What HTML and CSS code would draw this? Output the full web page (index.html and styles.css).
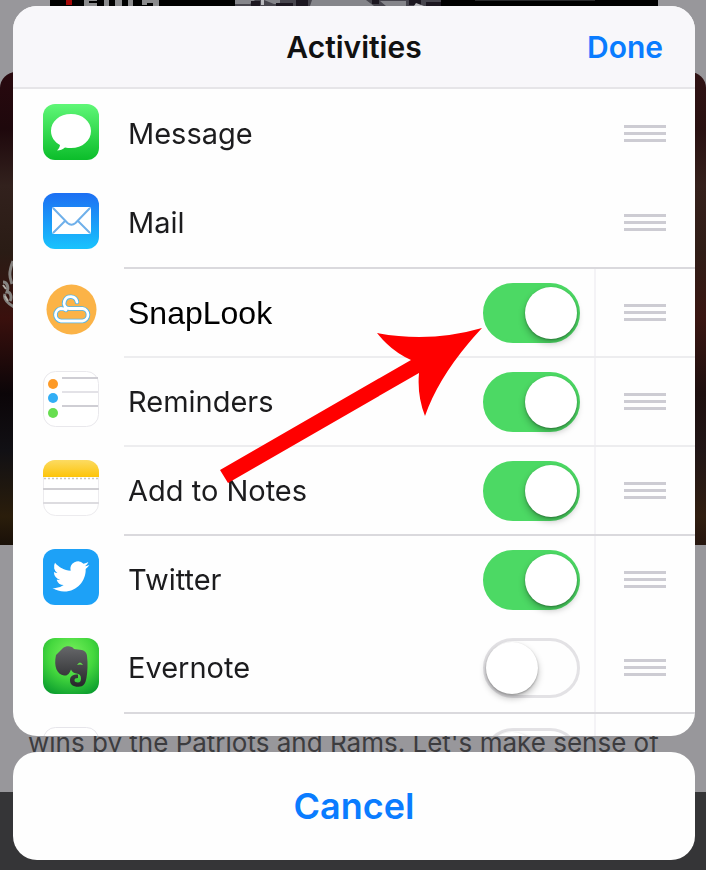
FILE: index.html
```html
<!DOCTYPE html>
<html lang="en">
<head>
<meta charset="utf-8">
<meta name="viewport" content="width=device-width, initial-scale=1">
<title>Activities</title>
<link rel="stylesheet" href="styles.css">
</head>
<body>
<div class="backdrop">
  <div class="poster">
    <svg class="poster-art" viewBox="0 0 608 6" preserveAspectRatio="none" aria-hidden="true">
      <path fill="#a50808" d="M16 0h6v5h-6z"/>
      <path fill="#8b8b8d" d="M34 0h13v1H39v2h8v3H34zM54 0h5v6h-5zM65 0h7v6h-7zM78 0h5v6h-5zM92 0h17v6h-6V3h-6v2h-5z"/>
      <path fill="#47454d" d="M185 0h206v6H185z"/>
      <path fill="#85858a" d="M185 0h20l-5 4h-15zM214 0h16v4h-6zM262 0h54l8 6h-64zM330 1h26v5h-20z"/>
      <path fill="#1c1720" d="M201 1h9v5h-9zM226 3h17v3h-17zM246 0h12v6h-12zM322 0h7v4h-7zM359 0h12v5h-12zM376 2h15v4h-15z"/>
      <path fill="#b9b9bd" d="M211 0h3v5h-3zM366 3l8 3h-10z"/>
      <path fill="#29292b" d="M425 0h120v1H425z"/>
    </svg>
  </div>
  <div class="hero">
    <svg class="hero-art" viewBox="0 0 14 60" aria-hidden="true">
      <path d="M13 1C8 14 10 18 12 24M3 22c4 0 6 5 4 10 4 0 5 6 3 9M5 34c-2 5 4 10 9 13" fill="none" stroke="#85827f" stroke-width="3"/>
      <path d="M5 36l3 5M3 25l3 4" stroke="#b3afa9" stroke-width="2"/>
    </svg>
  </div>
  <p class="article">wins by the Patriots and Rams. Let's make sense of</p>
  <div class="toolbar"></div>
</div>

<main class="sheet">
  <section class="panel">
    <header class="bar">
      <h1 class="title">Activities</h1>
      <button class="done" type="button">Done</button>
    </header>
    <ul class="list">
      <li class="row">
        <svg class="icon" viewBox="0 0 56 56" aria-hidden="true">
          <defs><linearGradient id="gMsg" x1="0" y1="0" x2="0" y2="1"><stop offset="0" stop-color="#5ff777"/><stop offset="1" stop-color="#0bbd2a"/></linearGradient></defs>
          <rect width="56" height="56" rx="12" fill="url(#gMsg)"/>
          <path fill="#fff" d="M28 10c-11.500 0-20 7.500-20 17 0 6 3.500 11 9 14-.3 2.200-1.200 4-3 5.500 3 0 5.800-1 8-3 2 .4 4 .6 6 .6 11.500 0 20-7.600 20-17.100S39.500 10 28 10z"/>
        </svg>
        <div class="cell"><span class="name">Message</span></div>
        <div class="side"><span class="grip"></span></div>
      </li>
      <li class="row">
        <svg class="icon" viewBox="0 0 56 56" aria-hidden="true">
          <defs><linearGradient id="gMail" x1="0" y1="0" x2="0" y2="1"><stop offset="0" stop-color="#1d6ff3"/><stop offset="1" stop-color="#19c3fd"/></linearGradient></defs>
          <rect width="56" height="56" rx="12" fill="url(#gMail)"/>
          <rect x="9" y="14" width="39" height="27" rx="2" fill="#fff"/>
          <path d="M10 15l14.500 15q4 3.500 8 0L47 15M10 40l12-12M47 40L35 28" fill="none" stroke="#6fb0ea" stroke-width="2"/>
        </svg>
        <div class="cell"><span class="name">Mail</span></div>
        <div class="side"><span class="grip"></span></div>
      </li>
      <li class="row row-ruled strong">
        <svg class="icon" viewBox="0 0 56 56" aria-hidden="true">
          <circle cx="28.500" cy="27.500" r="25" fill="#fbb347"/>
          <g fill="none" stroke-linecap="round" stroke-linejoin="round">
            <path d="M34 20a6.500 6.500 0 0 0-12.500-1c-1.500 4 1 7.500 5 7.500h13a6.300 6.300 0 0 1 0 12.500H18a6.300 6.300 0 0 1 0-12.500c2.500 0 3.500.5 5 1.500" stroke="#4eb5ed" stroke-width="4.500"/>
            <path d="M34 20a6.500 6.500 0 0 0-12.500-1c-1.500 4 1 7.500 5 7.500h13a6.300 6.300 0 0 1 0 12.500H18a6.300 6.300 0 0 1 0-12.500c2.500 0 3.500.5 5 1.500" stroke="#fff" stroke-width="2.800"/>
          </g>
        </svg>
        <div class="cell"><label class="name name-alt" for="s1">SnapLook</label><input class="switch" id="s1" type="checkbox" role="switch" checked></div>
        <div class="side split"><span class="grip"></span></div>
      </li>
      <li class="row row-ruled">
        <svg class="icon" viewBox="0 0 56 56" aria-hidden="true">
          <rect x=".5" y=".5" width="55" height="55" rx="12" fill="#fff" stroke="#e9e8ec"/>
          <path d="M19 7h36M19 35h36" stroke="#cfced4" stroke-width="2"/><path d="M19 21h36" stroke="#e3e2e7" stroke-width="2"/>
          <circle cx="10" cy="13" r="5" fill="#fd9a27"/><circle cx="10" cy="27" r="5" fill="#32aef5"/><circle cx="10" cy="42" r="5" fill="#67de50"/>
        </svg>
        <div class="cell"><label class="name" for="s2">Reminders</label><input class="switch" id="s2" type="checkbox" role="switch" checked></div>
        <div class="side split"><span class="grip"></span></div>
      </li>
      <li class="row row-ruled">
        <svg class="icon" viewBox="0 0 56 56" aria-hidden="true">
          <defs><linearGradient id="gNote" x1="0" y1="0" x2="0" y2="1"><stop offset="0" stop-color="#fcdb62"/><stop offset="1" stop-color="#fdc409"/></linearGradient></defs>
          <rect x=".5" y=".5" width="55" height="55" rx="12" fill="#fff" stroke="#ecebee"/>
          <path d="M0 17v-5A12 12 0 0 1 12 0h32a12 12 0 0 1 12 12v5z" fill="url(#gNote)"/>
          <path d="M1 18.500h54" stroke="#c9c6bd" stroke-width="1.500" stroke-dasharray="2 2"/>
          <path d="M0 29h56" stroke="#d0cfd3" stroke-width="2"/><path d="M0 43h56" stroke="#dddce0" stroke-width="2"/>
        </svg>
        <div class="cell"><label class="name" for="s3">Add to Notes</label><input class="switch" id="s3" type="checkbox" role="switch" checked></div>
        <div class="side split"><span class="grip"></span></div>
      </li>
      <li class="row row-ruled strong">
        <svg class="icon" viewBox="0 0 56 56" aria-hidden="true">
          <rect width="56" height="56" rx="12" fill="#1da1f7"/>
          <path fill="#fff" transform="translate(9.500 9) scale(1.540)" d="M23.950 4.570a10 10 0 0 1-2.820.77 4.960 4.960 0 0 0 2.160-2.720c-.95.560-2 .960-3.130 1.190a4.920 4.920 0 0 0-8.380 4.480C7.690 8.090 4.070 6.130 1.640 3.160a4.920 4.920 0 0 0 1.520 6.570 4.900 4.900 0 0 1-2.230-.61v.06a4.920 4.920 0 0 0 3.950 4.830 5 5 0 0 1-2.210.08 4.940 4.940 0 0 0 4.600 3.420A9.870 9.870 0 0 1 0 19.540a14 14 0 0 0 7.550 2.210c9.050 0 14-7.500 14-13.980 0-.21 0-.42-.02-.63a9.940 9.940 0 0 0 2.420-2.570z"/>
        </svg>
        <div class="cell"><label class="name" for="s4">Twitter</label><input class="switch" id="s4" type="checkbox" role="switch" checked></div>
        <div class="side split"><span class="grip"></span></div>
      </li>
      <li class="row">
        <svg class="icon" viewBox="0 0 56 56" aria-hidden="true">
          <defs>
            <radialGradient id="gEver" cx=".5" cy=".3" r=".8"><stop offset="0" stop-color="#7bf25e"/><stop offset=".5" stop-color="#45d83e"/><stop offset="1" stop-color="#07992d"/></radialGradient>
            <linearGradient id="gEle" x1="0" y1="0" x2="0" y2="1"><stop offset="0" stop-color="#66676a"/><stop offset="1" stop-color="#262729"/></linearGradient>
          </defs>
          <rect width="56" height="56" rx="12" fill="url(#gEver)"/>
          <path fill="url(#gEle)" d="M13 17l7-7c3-2.500 9-2.500 11 1l6 .8c4 .5 6.500 2 7 6 1 8 .5 16-.5 22-1 6-3 9-8 9-6 0-8.500-2.500-8.500-6.500 0-4 2.500-5.800 8-5.800v3.500c-2.500 0-3.500.7-3.500 2.300 0 1.700 1.300 2.200 3.500 2.200s3-1.200 3-4c0-3-1.500-4.500-4.500-5-3-.4-4.500-1.500-5.500-4-1.500 4-3.500 6.500-7 6-7-1-10.500-9-8-20.500z"/>
          <path fill="#63df49" d="M34 27q3-5 6 0-3-1-6 0z"/>
        </svg>
        <div class="cell"><label class="name" for="s5">Evernote</label><input class="switch" id="s5" type="checkbox" role="switch"></div>
        <div class="side split"><span class="grip"></span></div>
      </li>
      <li class="row row-ruled strong">
        <svg class="icon" viewBox="0 0 56 56" aria-hidden="true"><rect x=".5" y=".5" width="55" height="55" rx="12" fill="#fff" stroke="#e6e5ea"/></svg>
        <div class="cell cell-end"><input class="switch" type="checkbox" role="switch" aria-label="More"></div>
        <div class="side split"><span class="grip"></span></div>
      </li>
    </ul>
    <svg class="arrow" viewBox="0 0 264 156" aria-hidden="true">
      <path fill="#f00" d="M0 142L191 32Q171 23 157 5Q210 15 262 0Q220 45 205 88Q197 68 199 45L8 155z"/>
    </svg>
  </section>
  <button class="cancel" type="button">Cancel</button>
</main>
</body>
</html>
```
FILE: styles.css
```css
* { box-sizing: border-box; }

body {
  margin: 0;
  font-family: Inter, "Liberation Sans", sans-serif;
  color: #1c1c1e;
  background: #98979b;
}

button {
  border: 0;
  font: inherit;
  font-weight: 600;
  color: #0a7cff;
  cursor: pointer;
}

.backdrop {
  position: fixed;
  inset: 0;
  display: flex;
  flex-direction: column;
  background: #98979b;
  overflow: hidden;
}

.poster {
  height: 40px;
  margin: 0 48px 0 50px;
  background: #000;
}

.poster-art { display: block; width: 100%; height: 6px; }

.hero {
  height: 473px;
  margin-top: 32px;
  padding-top: 188px;
  border-radius: 16px 16px 0 0;
  background:
    linear-gradient(90deg, #0000 50%, #3a1f1a66 50%),
    linear-gradient(#29090f, #1e080c 12%, #32211d 24%, #2a1c15 38%, #3a100d 52%, #0b0508 68%, #111014 80%, #2a1d0b 94%, #191008);
}

.hero-art { display: block; width: 14px; height: 60px; }

.article {
  margin: 0;
  padding: 182px 28px 0;
  height: 247px;
  font-size: 26px;
  line-height: 32px;
  white-space: nowrap;
  color: #3c3c3f;
}

.toolbar { flex: 1; background: #353537; }

.sheet {
  position: relative;
  display: flex;
  flex-direction: column;
  gap: 16px;
  height: 100vh;
  padding: 6px 11px 10px 13px;
}

.panel {
  position: relative;
  display: flex;
  flex: 1;
  flex-direction: column;
  min-height: 0;
  border-radius: 24px;
  background: #fefefe;
  overflow: hidden;
}

.bar {
  display: grid;
  grid-template-columns: 1fr auto 1fr;
  align-items: center;
  flex: none;
  height: 83px;
  padding: 0 32px;
  border-bottom: 2px solid #e6e5e8;
  background: #f8f7fa;
}

.title {
  grid-column: 2;
  margin: 0;
  font-size: 30px;
  font-weight: 600;
  line-height: 40px;
  color: #111;
}

.done {
  justify-self: end;
  padding: 0;
  font-size: 30px;
  line-height: 40px;
  background: none;
}

.list {
  flex: 1;
  min-height: 0;
  margin: 0;
  padding: 0;
  list-style: none;
  overflow: hidden;
}

.row {
  display: flex;
  height: 89px;
  padding-left: 30px;
}

.icon { flex: none; width: 56px; height: 56px; margin-top: 15px; }

.cell {
  display: flex;
  flex: 1;
  align-items: center;
  justify-content: space-between;
  margin-left: 25px;
  padding: 0 14px 0 4px;
}

.cell-end { justify-content: flex-end; }

.side {
  display: flex;
  align-items: center;
  justify-content: center;
  width: 101px;
}

.row-ruled .cell, .row-ruled .side { border-top: 2px solid #ededef; }
.strong .cell, .strong .side { border-top-color: #dad9dd; }
.split { box-shadow: inset 2px 0 #f4f3f6; }

.name { font-size: 29px; line-height: 40px; }
.name-alt { font-family: "Liberation Sans", Arial, sans-serif; font-size: 32px; color: #000; }

.grip {
  width: 42px;
  height: 18px;
  background: repeating-linear-gradient(#cdccd3 0 3px, #0000 3px 7px);
}

.switch {
  appearance: none;
  flex: none;
  display: flex;
  align-items: center;
  width: 97px;
  height: 60px;
  margin: 0;
  border: 3px solid #e3e2e5;
  border-radius: 30px;
  background: #fefefe;
}

.switch::before {
  content: "";
  width: 52px;
  height: 52px;
  border-radius: 50%;
  background: #fff;
  box-shadow: 0 4px 7px #0004, 0 1px 2px #0004;
}

.switch:checked {
  justify-content: flex-end;
  border-color: #4cd964;
  background: #4cd964;
}

.arrow {
  position: absolute;
  top: 322px;
  left: 207px;
  width: 264px;
  height: 156px;
  pointer-events: none;
}

.cancel {
  flex: none;
  height: 108px;
  border-radius: 24px;
  font-size: 36px;
  background: #fefefe;
}
```
